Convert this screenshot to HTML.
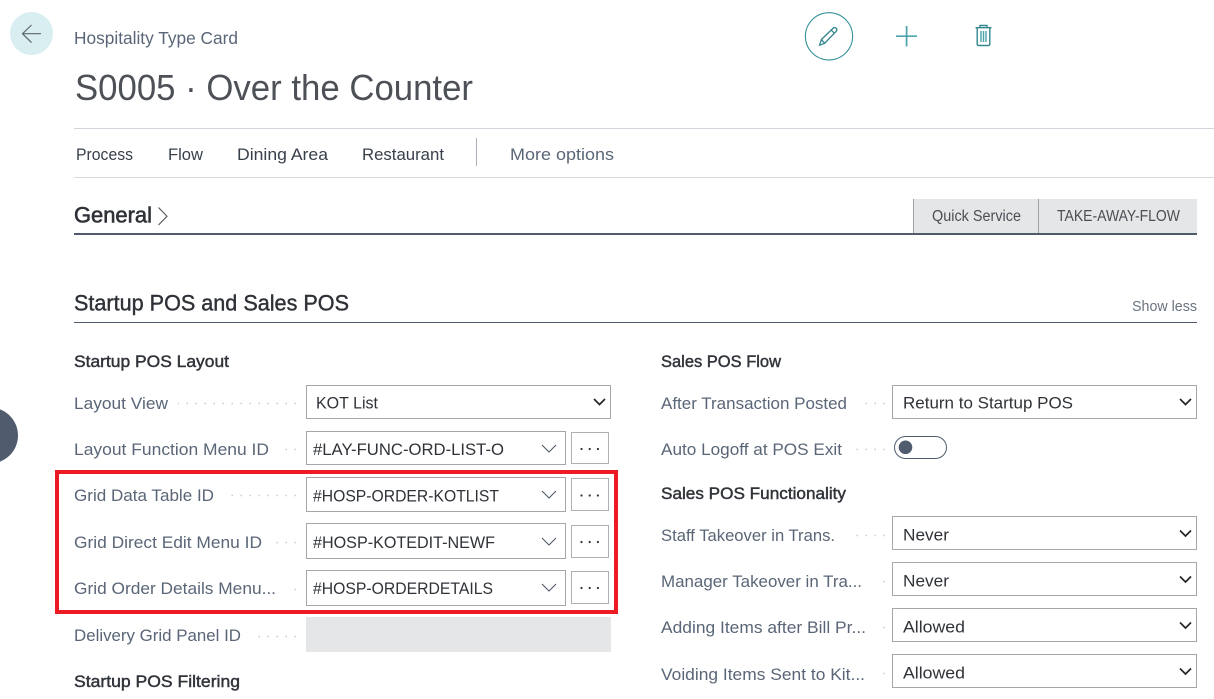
<!DOCTYPE html>
<html lang="en"><head><meta charset="utf-8"><title>Hospitality Type Card</title>
<style>
html,body{margin:0;padding:0;background:#fff;width:1214px;height:699px;overflow:hidden}
svg{display:block;font-family:"Liberation Sans",sans-serif}
text{white-space:pre}
.l{font-size:17px;fill:#5a6677}
.v{font-size:17px;fill:#2f3338}
.h{font-size:17px;fill:#30343a;stroke:#30343a;stroke-width:.45}
.m{font-size:17px;fill:#38404b}
.box{fill:#fff;stroke:#a6a6a6;stroke-width:1}
.eb{fill:#fff;stroke:#b0b0b0;stroke-width:1}
.dots{stroke:#c8cbd0;stroke-width:1.5;stroke-dasharray:1.5 7.5;fill:none}
.sc{fill:none;stroke:#262626;stroke-width:1.7}
.cc{fill:none;stroke:#4a5564;stroke-width:1}
.e{fill:#2f3338}
</style></head><body>
<svg width="1214" height="699" viewBox="0 0 1214 699" xmlns="http://www.w3.org/2000/svg">
<!-- back -->
<circle cx="31.5" cy="33.5" r="21.5" fill="#d9eef1"/>
<path d="M41 33.7H22.5M31.5 25L22.5 33.7L31.5 42.6" fill="none" stroke="#5c6670" stroke-width="1.2"/>
<text x="74" y="44" class="l" textLength="164" lengthAdjust="spacingAndGlyphs" style="font-size:17.5px">Hospitality Type Card</text>
<text x="75" y="100" textLength="398" lengthAdjust="spacingAndGlyphs" style="font-size:36.5px;fill:#4d5157">S0005 · Over the Counter</text>
<!-- actions -->
<circle cx="829" cy="36.3" r="23.6" fill="none" stroke="#35929b" stroke-width="1.1"/>
<path d="M819.6 45.2L821.4 39.5L833.2 28.1Q834.6 26.9 836.2 28.3Q837.6 29.9 836.2 31.3L824.6 43.3ZM821.4 39.5L824.6 43.3M831.2 30.1L834.4 33.3" fill="none" stroke="#2f858e" stroke-width="1.3"/>
<path d="M896 36.2H917M906.6 26V46.5" fill="none" stroke="#4ba3ab" stroke-width="1.7"/>
<path d="M975.5 27.7H991.5M980 27.5V25.5H987V27.5M977.2 28V44Q977.2 45.5 978.7 45.5H988.3Q989.8 45.5 989.8 44V28" fill="none" stroke="#35878f" stroke-width="1.4"/>
<path d="M981 31V42M983.5 31V42M986 31V42" fill="none" stroke="#4ba3ab" stroke-width="1.4"/>
<!-- lines -->
<path d="M74 128.5H1214" stroke="#d3d6dc"/>
<path d="M74 177.5H1214" stroke="#dadbde"/>
<!-- menu -->
<text x="76" y="160" class="m" textLength="57" lengthAdjust="spacingAndGlyphs">Process</text>
<text x="168" y="160" class="m" textLength="35" lengthAdjust="spacingAndGlyphs">Flow</text>
<text x="237" y="160" class="m" textLength="91" lengthAdjust="spacingAndGlyphs">Dining Area</text>
<text x="362" y="160" class="m" textLength="82" lengthAdjust="spacingAndGlyphs">Restaurant</text>
<path d="M476.5 138V166" stroke="#a9aeb6"/>
<text x="510" y="160" class="l" textLength="104" lengthAdjust="spacingAndGlyphs">More options</text>
<!-- General -->
<text x="74" y="222.5" textLength="78" lengthAdjust="spacingAndGlyphs" style="font-size:22px;fill:#2e3137;stroke:#2e3137;stroke-width:.6">General</text>
<path d="M158.5 207.5L167 216.2L158.5 225" fill="none" stroke="#555" stroke-width="1.1"/>
<rect x="913" y="199" width="284" height="34" fill="#e5e6e8"/>
<path d="M913.5 199V233M1038.5 199V233" stroke="#a0a0a0"/>
<text x="932" y="221" textLength="89" lengthAdjust="spacingAndGlyphs" style="font-size:15.5px;fill:#4a4f55">Quick Service</text>
<text x="1057" y="221" textLength="123" lengthAdjust="spacingAndGlyphs" style="font-size:15.5px;fill:#4a4f55">TAKE-AWAY-FLOW</text>
<rect x="74" y="233" width="1123" height="2" fill="#505c6d"/>
<!-- section -->
<text x="74" y="310.5" textLength="275" lengthAdjust="spacingAndGlyphs" style="font-size:22px;fill:#2e3137;stroke:#2e3137;stroke-width:.4">Startup POS and Sales POS</text>
<path d="M74 322.5H1197" stroke="#505c6d"/>
<text x="1132" y="311" textLength="65" lengthAdjust="spacingAndGlyphs" style="font-size:15px;fill:#6a7380">Show less</text>
<!-- side bubble -->
<circle cx="-10" cy="435.5" r="28" fill="#505c6d"/>
<!-- left column -->
<text x="74" y="367" class="h" textLength="155" lengthAdjust="spacingAndGlyphs">Startup POS Layout</text>

<text x="74" y="409" class="l" textLength="94" lengthAdjust="spacingAndGlyphs">Layout View</text>
<path class="dots" d="M296 403.5H178"/>
<rect class="box" x="306.5" y="385.5" width="304" height="33"/>
<text x="316" y="408.5" class="v" textLength="62" lengthAdjust="spacingAndGlyphs">KOT List</text>
<path class="sc" d="M594 399L599.5 404.5L605 399"/>

<text x="74" y="455" class="l" textLength="195" lengthAdjust="spacingAndGlyphs">Layout Function Menu ID</text>
<path class="dots" d="M296 449.5H282"/>
<rect class="box" x="306.5" y="431.5" width="259" height="33"/>
<text x="313" y="455" class="v" textLength="191" lengthAdjust="spacingAndGlyphs">#LAY-FUNC-ORD-LIST-O</text>
<path class="cc" d="M542 445L549 452L556 445"/>
<rect class="eb" x="571.5" y="432.5" width="37" height="31"/>
<circle class="e" cx="581.5" cy="449" r="1.1"/><circle class="e" cx="589.7" cy="449" r="1.1"/><circle class="e" cx="597.9" cy="449" r="1.1"/>

<text x="74" y="501" class="l" textLength="140" lengthAdjust="spacingAndGlyphs">Grid Data Table ID</text>
<path class="dots" d="M296 495.5H225"/>
<rect class="box" x="306.5" y="477.5" width="259" height="34"/>
<text x="313" y="501.5" class="v" textLength="186" lengthAdjust="spacingAndGlyphs">#HOSP-ORDER-KOTLIST</text>
<path class="cc" d="M542 491L549 498L556 491"/>
<rect class="eb" x="571.5" y="478.5" width="37" height="32"/>
<circle class="e" cx="581.5" cy="495.5" r="1.1"/><circle class="e" cx="589.7" cy="495.5" r="1.1"/><circle class="e" cx="597.9" cy="495.5" r="1.1"/>

<text x="74" y="548" class="l" textLength="188" lengthAdjust="spacingAndGlyphs">Grid Direct Edit Menu ID</text>
<path class="dots" d="M296 542.5H275"/>
<rect class="box" x="306.5" y="523.5" width="259" height="35"/>
<text x="313" y="548" class="v" textLength="182" lengthAdjust="spacingAndGlyphs">#HOSP-KOTEDIT-NEWF</text>
<path class="cc" d="M542 538L549 545L556 538"/>
<rect class="eb" x="571.5" y="525.5" width="37" height="32"/>
<circle class="e" cx="581.5" cy="542" r="1.1"/><circle class="e" cx="589.7" cy="542" r="1.1"/><circle class="e" cx="597.9" cy="542" r="1.1"/>

<text x="74" y="594" class="l" textLength="202" lengthAdjust="spacingAndGlyphs">Grid Order Details Menu...</text>
<path class="dots" d="M296 589.5H294"/>
<rect class="box" x="306.5" y="570.5" width="259" height="35"/>
<text x="313" y="594" class="v" textLength="180" lengthAdjust="spacingAndGlyphs">#HOSP-ORDERDETAILS</text>
<path class="cc" d="M542 584L549 591L556 584"/>
<rect class="eb" x="571.5" y="571.5" width="37" height="32"/>
<circle class="e" cx="581.5" cy="588" r="1.1"/><circle class="e" cx="589.7" cy="588" r="1.1"/><circle class="e" cx="597.9" cy="588" r="1.1"/>

<rect x="57" y="472" width="559" height="140" fill="none" stroke="#ed1c24" stroke-width="4"/>

<text x="74" y="641" class="l" textLength="167" lengthAdjust="spacingAndGlyphs">Delivery Grid Panel ID</text>
<path class="dots" d="M296 636.5H252"/>
<rect x="306" y="617" width="305" height="35" fill="#e5e6e8"/>

<text x="74" y="687" class="h" textLength="166" lengthAdjust="spacingAndGlyphs">Startup POS Filtering</text>

<!-- right column -->
<text x="661" y="367" class="h" textLength="120" lengthAdjust="spacingAndGlyphs">Sales POS Flow</text>

<text x="661" y="409" class="l" textLength="186" lengthAdjust="spacingAndGlyphs">After Transaction Posted</text>
<path class="dots" d="M885 403.5H860"/>
<rect class="box" x="892.5" y="385.5" width="304" height="33"/>
<text x="903" y="408.5" class="v" textLength="170" lengthAdjust="spacingAndGlyphs">Return to Startup POS</text>
<path class="sc" d="M1180 399L1185.5 404.5L1191 399"/>

<text x="661" y="455" class="l" textLength="181" lengthAdjust="spacingAndGlyphs">Auto Logoff at POS Exit</text>
<path class="dots" d="M885 449.5H852"/>
<rect x="894.5" y="436.5" width="52" height="22" rx="11" fill="#fff" stroke="#505c6d"/>
<circle cx="905.5" cy="447.3" r="6.8" fill="#505c6d"/>

<text x="661" y="499" class="h" textLength="185" lengthAdjust="spacingAndGlyphs">Sales POS Functionality</text>

<text x="661" y="541" class="l" textLength="174" lengthAdjust="spacingAndGlyphs">Staff Takeover in Trans.</text>
<path class="dots" d="M885 535.5H852"/>
<rect class="box" x="892.5" y="516.5" width="304" height="33"/>
<text x="903" y="540.5" class="v" textLength="46" lengthAdjust="spacingAndGlyphs">Never</text>
<path class="sc" d="M1180 530.5L1185.5 536L1191 530.5"/>

<text x="661" y="587" class="l" textLength="201" lengthAdjust="spacingAndGlyphs">Manager Takeover in Tra...</text>
<path class="dots" d="M885 581.5H881"/>
<rect class="box" x="892.5" y="562.5" width="304" height="33"/>
<text x="903" y="586.5" class="v" textLength="46" lengthAdjust="spacingAndGlyphs">Never</text>
<path class="sc" d="M1180 576.5L1185.5 582L1191 576.5"/>

<text x="661" y="633" class="l" textLength="205" lengthAdjust="spacingAndGlyphs">Adding Items after Bill Pr...</text>
<path class="dots" d="M885 627.5H881"/>
<rect class="box" x="892.5" y="608.5" width="304" height="33"/>
<text x="903" y="632.5" class="v" textLength="62" lengthAdjust="spacingAndGlyphs">Allowed</text>
<path class="sc" d="M1180 622.5L1185.5 628L1191 622.5"/>

<text x="661" y="680" class="l" textLength="204" lengthAdjust="spacingAndGlyphs">Voiding Items Sent to Kit...</text>
<path class="dots" d="M885 673.5H881"/>
<rect class="box" x="892.5" y="654.5" width="304" height="33"/>
<text x="903" y="678.5" class="v" textLength="62" lengthAdjust="spacingAndGlyphs">Allowed</text>
<path class="sc" d="M1180 668.5L1185.5 674L1191 668.5"/>
</svg>
</body></html>
